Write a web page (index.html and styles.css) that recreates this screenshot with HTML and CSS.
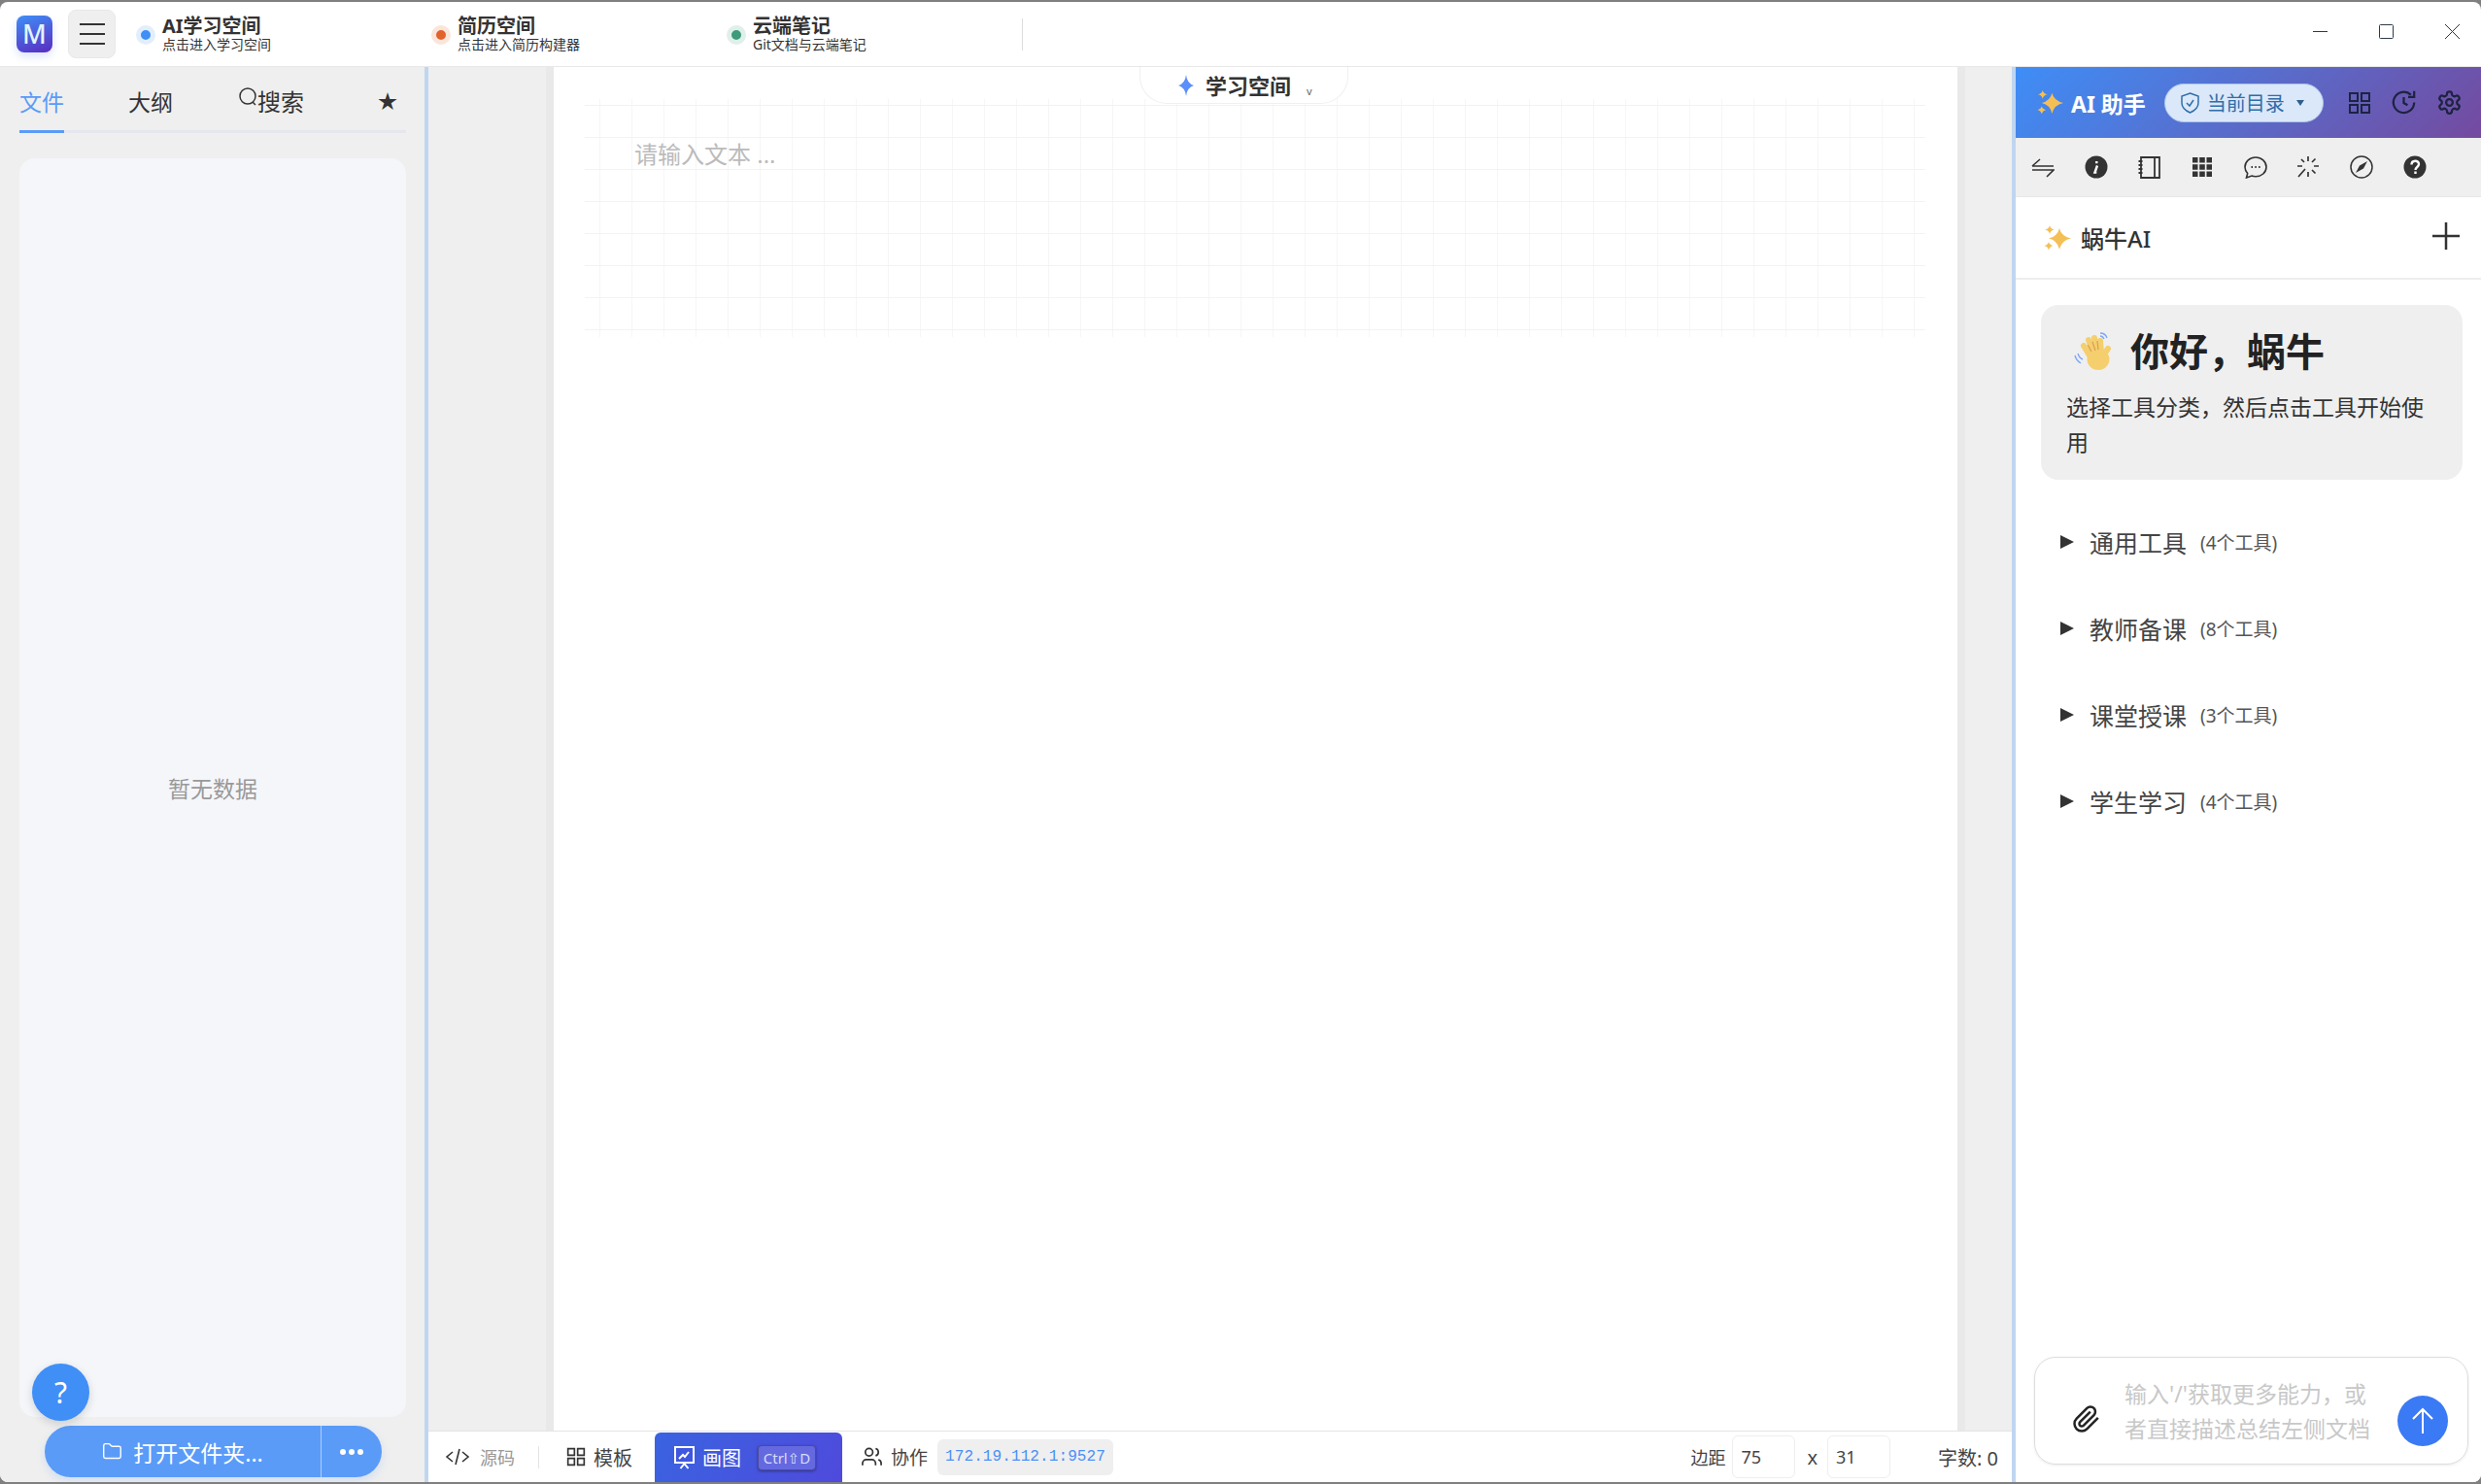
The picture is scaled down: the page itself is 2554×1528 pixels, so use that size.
FILE: index.html
```html
<!DOCTYPE html>
<html lang="zh-CN">
<head>
  <meta charset="UTF-8" />
  <title>蜗牛笔记</title>
  <link rel="stylesheet" href="styles.css">
</head>
<body>
  <svg class="defs" width="0" height="0">
    <symbol id="sparkle" viewBox="0 0 28 28">
      <path d="M16 4Q18 12.500 28 14.500Q18 16.500 16 26Q14 16.500 5 14.500Q14 12.500 16 4Z" fill="#f4bf55"/>
      <path d="M6 1Q6.800 4.700 11 5.500Q6.800 6.300 6 10Q5.200 6.300 1 5.500Q5.200 4.700 6 1Z" fill="#f4bf55"/>
      <path d="M5 18Q5.800 21.200 9.500 22Q5.800 22.800 5 26.500Q4.200 22.800 .5 22Q4.200 21.200 5 18Z" fill="#f4bf55"/>
    </symbol>
    <symbol id="grid4" viewBox="0 0 24 24">
      <path d="M2 2h8v8H2zM14 2h8v8h-8zM2 14h8v8H2zM14 14h8v8h-8z" fill="none" stroke="currentColor" stroke-width="2"/>
    </symbol>
  </svg>

  <div class="window">
    <!-- 顶部标题栏 -->
    <header class="titlebar">
      <div class="logo">M</div>
      <button class="menu-btn"><i></i><i></i><i></i></button>
      <div class="space-tabs">
        <div class="space-tab blue">
          <span class="dot"></span>
          <div><div class="space-name">AI学习空间</div><div class="space-sub">点击进入学习空间</div></div>
        </div>
        <div class="space-tab orange">
          <span class="dot"></span>
          <div><div class="space-name">简历空间</div><div class="space-sub">点击进入简历构建器</div></div>
        </div>
        <div class="space-tab green">
          <span class="dot"></span>
          <div><div class="space-name">云端笔记</div><div class="space-sub">Git文档与云端笔记</div></div>
        </div>
      </div>
      <div class="title-divider"></div>
      <div class="win-controls">
        <svg width="15" height="15" viewBox="0 0 15 15"><path d="M0 7.500h15" stroke="#2e3a4a" stroke-width="1"/></svg>
        <svg width="15" height="15" viewBox="0 0 15 15"><rect x=".5" y=".5" width="14" height="14" rx="1" fill="none" stroke="#2e3a4a"/></svg>
        <svg width="15" height="15" viewBox="0 0 15 15"><path d="M0 0l15 15M15 0L0 15" stroke="#2e3a4a" stroke-width="1"/></svg>
      </div>
    </header>

    <div class="main">
      <!-- 左侧文件栏 -->
      <aside class="left">
        <nav class="tabs">
          <span class="tab active">文件</span>
          <span class="tab outline">大纲</span>
          <span class="tab search">
            <svg width="20" height="22" viewBox="0 0 20 22"><circle cx="10" cy="10" r="8" fill="none" stroke="#333" stroke-width="1.500"/><path d="M15 16l3 3" stroke="#333" stroke-width="1.500"/></svg>搜索
          </span>
          <span class="tab star">★</span>
        </nav>
        <div class="file-panel">暂无数据</div>
        <div class="open-btn">
          <div class="open-main">
            <svg width="21" height="21" viewBox="0 0 24 24" fill="none" stroke="#fff" stroke-width="1.600"><path d="M20 20a2 2 0 0 0 2-2V8a2 2 0 0 0-2-2h-7.900a2 2 0 0 1-1.690-.9L9.600 3.900A2 2 0 0 0 7.930 3H4a2 2 0 0 0-2 2v13a2 2 0 0 0 2 2Z"/></svg>
            打开文件夹...
          </div>
          <div class="open-more"><i></i><i></i><i></i></div>
        </div>
        <div class="help-btn">?</div>
      </aside>

      <!-- 中间编辑区 -->
      <section class="center">
        <div class="editor-bg">
          <div class="page">
            <div class="page-tab">
              <svg width="18" height="24" viewBox="0 0 18 24"><path d="M9 1Q10 10 17 12Q10 14 9 23Q8 14 1 12Q8 10 9 1Z" fill="#5b8ff9"/></svg>
              <b>学习空间</b>
              <span class="caret">v</span>
            </div>
            <div class="canvas">请输入文本 ...</div>
          </div>
        </div>
        <footer class="statusbar">
          <span class="status-item source">
            <svg width="26" height="18" viewBox="0 0 26 18" fill="none" stroke="#333" stroke-width="1.600"><path d="M8 4L2 9l6 5M18 4l6 5-6 5M15 1l-4 16"/></svg>
            源码
          </span>
          <span class="status-sep"></span>
          <span class="status-item template">
            <svg width="20" height="20" color="#333"><use href="#grid4"/></svg>
            模板
          </span>
          <span class="draw-btn">
            <svg width="21" height="24" viewBox="0 0 21 24"><path d="M1 1h19v16H1z" fill="#3f56df" stroke="#fff" stroke-width="2"/><path d="M5 13l4-4 2 2 4-5" fill="none" stroke="#fff" stroke-width="2"/><path d="M10.500 18l-4 5M10.500 18l4 5" stroke="#fff" stroke-width="2"/></svg>
            画图
            <kbd>Ctrl⇧D</kbd>
          </span>
          <span class="status-item collab">
            <svg width="23" height="24" viewBox="0 0 24 24" fill="none" stroke="#333" stroke-width="1.800"><path d="M16 21v-2a4 4 0 0 0-4-4H6a4 4 0 0 0-4 4v2"/><circle cx="9" cy="7" r="4"/><path d="M22 21v-2a4 4 0 0 0-3-3.870"/><path d="M16 3.130a4 4 0 0 1 0 7.750"/></svg>
            协作
          </span>
          <code class="ip">172.19.112.1:9527</code>
          <div class="status-right">
            <span>边距</span>
            <span class="num-box">75</span>
            <span class="times">x</span>
            <span class="num-box">31</span>
            <span class="count">字数: 0</span>
          </div>
        </footer>
      </section>

      <!-- 右侧 AI 助手 -->
      <aside class="right">
        <div class="ai-head">
          <svg class="head-star" width="27" height="27"><use href="#sparkle"/></svg>
          <b class="ai-title">AI 助手</b>
          <div class="scope">
            <svg width="19" height="22" viewBox="0 0 19 22" fill="none" stroke="#2f6ea8" stroke-width="1.500"><path d="M9.500 1L18 4v7c0 5-4 8-8.500 10C5 19 1 16 1 11V4z"/><path d="M6 11l3 3 4-6"/></svg>
            当前目录
            <span class="scope-arrow"></span>
          </div>
          <div class="head-icons">
            <svg width="24" height="24"><use href="#grid4"/></svg>
            <svg width="27" height="27" viewBox="0 0 24 24" fill="none" stroke="currentColor" stroke-width="2"><path d="M21.500 12a9.500 9.500 0 1 1-3-7"/><path d="M21.500 1.500V7h-5.500"/><path d="M12 7v5.500l3.500 2"/></svg>
            <svg width="27" height="27" viewBox="0 0 24 24" fill="none" stroke="currentColor" stroke-width="2"><path d="M12.220 2h-.44a2 2 0 0 0-2 2v.18a2 2 0 0 1-1 1.730l-.43.25a2 2 0 0 1-2 0l-.15-.08a2 2 0 0 0-2.730.73l-.22.38a2 2 0 0 0 .73 2.730l.15.1a2 2 0 0 1 1 1.720v.51a2 2 0 0 1-1 1.740l-.15.09a2 2 0 0 0-.73 2.730l.22.38a2 2 0 0 0 2.730.73l.15-.08a2 2 0 0 1 2 0l.43.25a2 2 0 0 1 1 1.730V20a2 2 0 0 0 2 2h.44a2 2 0 0 0 2-2v-.18a2 2 0 0 1 1-1.730l.43-.25a2 2 0 0 1 2 0l.15.08a2 2 0 0 0 2.730-.73l.22-.39a2 2 0 0 0-.73-2.730l-.15-.08a2 2 0 0 1-1-1.740v-.5a2 2 0 0 1 1-1.740l.15-.09a2 2 0 0 0 .73-2.730l-.22-.38a2 2 0 0 0-2.730-.73l-.15.08a2 2 0 0 1-2 0l-.43-.25a2 2 0 0 1-1-1.730V4a2 2 0 0 0-2-2z"/><circle cx="12" cy="12" r="3"/></svg>
          </div>
        </div>

        <div class="ai-tools">
          <svg width="24" height="24" viewBox="0 0 24 24" fill="none" stroke="#333" stroke-width="1.600"><path d="M1 11h22M1 11l8-7M1 15h22l-7 7"/></svg>
          <svg width="24" height="24" viewBox="0 0 24 24"><circle cx="12" cy="12" r="11.500" fill="#333"/><path d="M13 10.500l-2.500 7h1.800M12.300 6v2.200" fill="none" stroke="#fff" stroke-width="2.400"/></svg>
          <svg width="24" height="24" viewBox="0 0 24 24" fill="none" stroke="#333" stroke-width="1.800"><path d="M4 2h19v21H4zM18 2v21M1.500 6h4M1.500 10h4M1.500 14h4M1.500 18h4"/></svg>
          <svg width="24" height="24" viewBox="0 0 24 22" fill="#333"><path d="M2 1h5.500v5.500H2zM9.200 1h5.600v5.500H9.200zM16.500 1H22v5.500h-5.500zM2 8.200h5.500v5.600H2zM9.200 8.200h5.600v5.600H9.200zM16.500 8.200H22v5.600h-5.500zM2 15.500h5.500V21H2zM9.200 15.500h5.600V21H9.200zM16.500 15.500H22V21h-5.500z"/></svg>
          <svg width="24" height="24" viewBox="0 0 24 24" fill="none" stroke="#333" stroke-width="1.600"><path d="M12 2c6 0 11 4.400 11 10s-5 9.800-11 9.800c-1.500 0-2.800-.2-4-.7L2.500 23l1.200-4.500C2 16.700 1 14.500 1 12 1 6.400 6 2 12 2z"/><path d="M7.500 12h1.500M11.300 12h1.500M15.100 12h1.500" stroke-width="2"/></svg>
          <svg width="24" height="24" viewBox="0 0 24 24" fill="none" stroke="#333" stroke-width="1.700"><path d="M12 1v5M12 17v5M23 11h-5M6 11H1M19.500 3.500L16 7M19.500 18.500L16 15M8 7L5 4M9 14l-7 8"/></svg>
          <svg width="24" height="24" viewBox="0 0 24 24"><circle cx="12" cy="12" r="11" fill="none" stroke="#333" stroke-width="1.500"/><path d="M18 6l-8 4.500-4 7.500 8-4.500z" fill="#333"/></svg>
          <svg width="24" height="24" viewBox="0 0 24 24"><circle cx="12" cy="12" r="11.500" fill="#333"/><path d="M8.500 9.500c0-5 7.500-5 7.500-.5 0 3-3.500 3-3.500 6M12.500 16.500v2.500" fill="none" stroke="#fff" stroke-width="2.400"/></svg>
        </div>

        <div class="chat-title">
          <svg width="28" height="28"><use href="#sparkle"/></svg>
          <b>蜗牛AI</b>
          <svg class="plus" width="28" height="28" viewBox="0 0 28 28"><path d="M14 0v28M0 14h28" stroke="#333" stroke-width="2.500"/></svg>
        </div>

        <div class="hello-card">
          <h1>
            <svg width="40" height="40" viewBox="0 0 40 40">
              <g stroke="#f5cf6e" stroke-width="6" stroke-linecap="round">
                <path d="M16 24L10 14M20 21L15 8M24 20L21 6M28 22L27 9M30 24l5-7"/>
              </g>
              <ellipse cx="25" cy="28" rx="11.500" ry="11" fill="#f5cf6e"/>
              <path d="M14 13l4 7M19 10l3 9M24 9l1 9" stroke="#d99e50" stroke-width="1.200" fill="none"/>
              <path d="M1 24c1 4 3 6 6 8M4 22c1 3 2 5 5 6M27 1c3 0 6 2 7 5M27 4c2 0 3 1 4 3" stroke="#7ea8f7" stroke-width="1.400" fill="none"/>
            </svg>
            你好，蜗牛
          </h1>
          <p>选择工具分类，然后点击工具开始使用</p>
        </div>

        <ul class="tool-groups">
          <li><span class="arrow"></span>通用工具<small>(4个工具)</small></li>
          <li><span class="arrow"></span>教师备课<small>(8个工具)</small></li>
          <li><span class="arrow"></span>课堂授课<small>(3个工具)</small></li>
          <li><span class="arrow"></span>学生学习<small>(4个工具)</small></li>
        </ul>

        <div class="ask-box">
          <svg class="clip" width="30" height="30" viewBox="0 0 24 24" fill="none" stroke="#222" stroke-width="2"><path d="m21.440 11.050-9.190 9.190a6 6 0 0 1-8.490-8.490l8.570-8.570A4 4 0 1 1 18 8.840l-8.590 8.570a2 2 0 0 1-2.830-2.830l8.490-8.480"/></svg>
          <div class="ask-text">输入'/'获取更多能力，或者直接描述总结左侧文档</div>
          <div class="send-btn">
            <svg width="24" height="28" viewBox="0 0 24 28" fill="none" stroke="#fff" stroke-width="2"><path d="M12 27V2M2 12L12 2l10 10"/></svg>
          </div>
        </div>
      </aside>
    </div>
  </div>
</body>
</html>
```

FILE: styles.css
```css
/* ======= 页面整体 ======= */
* {
  box-sizing: border-box;
  margin: 0;
  padding: 0;
}
body {
  font-family: "Noto Sans", "Noto Sans CJK SC", sans-serif;
  color: #333;
  background: #808080;
  overflow: hidden;
}
.defs {
  position: absolute;
}
.window {
  height: 1524px;
  margin-top: 2px;
  display: flex;
  flex-direction: column;
  background: #fff;
  border-radius: 8px;
  overflow: hidden;
}

/* ======= 标题栏 ======= */
.titlebar {
  height: 67px;
  padding-left: 17px;
  display: flex;
  align-items: center;
  border-bottom: 1px solid #e8e8e8;
}
.logo {
  width: 37px;
  height: 38px;
  border-radius: 8px;
  background: linear-gradient(160deg, #3f8ff7, #5a2bc0);
  color: #dff4ff;
  font-size: 27px;
  line-height: 38px;
  font-weight: 500;
  text-align: center;
  box-shadow: 0 4px 8px rgba(80, 120, 240, 0.2);
}
.menu-btn {
  width: 49px;
  height: 50px;
  margin-left: 16px;
  display: flex;
  flex-direction: column;
  justify-content: center;
  align-items: center;
  gap: 8px;
  background: #efefef;
  border: 1px solid #e8e8e8;
  border-radius: 8px;
}
.menu-btn i {
  display: block;
  width: 26px;
  height: 2px;
  background: #333;
}
.space-tabs {
  display: flex;
  margin-left: 21px;
}
.space-tab {
  width: 304px;
  display: flex;
  align-items: center;
  gap: 7px;
  padding-top: 2px;
}
.dot {
  width: 20px;
  height: 20px;
  border-radius: 50%;
  border: 5px solid;
}
.blue .dot { background: #3f8ff7; border-color: #e3eefc; }
.orange .dot { background: #e2622c; border-color: #fae5da; }
.green .dot { background: #3d9a7c; border-color: #e0efe9; }
.space-name {
  font-size: 20px;
  line-height: 20px;
  font-weight: 700;
}
.space-sub {
  font-size: 14px;
  line-height: 18px;
}
.title-divider {
  width: 1px;
  height: 33px;
  background: #ddd;
}
.win-controls {
  margin-left: auto;
  padding-right: 22px;
  display: flex;
  gap: 53px;
  position: relative;
  top: -3px;
}

/* ======= 主体三栏 ======= */
.main {
  flex: 1;
  display: flex;
  min-height: 0;
}

/* ======= 左栏 ======= */
.left {
  position: relative;
  width: 441px;
  padding: 0 19px 0 20px;
  display: flex;
  flex-direction: column;
  background: #efefef;
  border-right: 4px solid #bfd6f0;
}
.tabs {
  display: flex;
  border-bottom: 3px solid #e5e7ee;
}
.tab {
  padding: 20px 0 13px;
  font-size: 23px;
  line-height: 32px;
  color: #333;
}
.tab.active {
  color: #5a9bf8;
  border-bottom: 3px solid #5a9bf8;
  margin-bottom: -3px;
}
.tab.outline { margin-left: 66px; }
.tab.search {
  margin-left: 67px;
  display: flex;
  align-items: flex-start;
  font-size: 24px;
}
.tab.star {
  margin-left: auto;
  margin-right: 9px;
  font-size: 20px;
}
.file-panel {
  flex: 1;
  margin-top: 26px;
  display: flex;
  align-items: center;
  justify-content: center;
  background: #f5f6fa;
  border-radius: 16px;
  font-size: 23px;
  color: #999;
}
.open-btn {
  height: 53px;
  margin: 9px 25px 5px 26px;
  display: flex;
  background: #5a9bf8;
  border-radius: 27px;
  color: #fff;
  font-size: 23px;
  box-shadow: 0 4px 10px rgba(90, 155, 248, 0.2);
}
.open-main {
  flex: 1;
  display: flex;
  align-items: center;
  justify-content: center;
  gap: 11px;
}
.open-more {
  width: 63px;
  display: flex;
  align-items: center;
  justify-content: center;
  gap: 3px;
  border-left: 1px solid rgba(255, 255, 255, 0.5);
}
.open-more i {
  width: 6px;
  height: 6px;
  border-radius: 50%;
  background: #fff;
}
.help-btn {
  position: absolute;
  left: 33px;
  bottom: 63px;
  width: 59px;
  height: 59px;
  border-radius: 50%;
  background: #3f8ff7;
  color: #fff;
  font-size: 30px;
  line-height: 59px;
  text-align: center;
  box-shadow: 0 3px 10px rgba(0, 0, 0, 0.15);
}

/* ======= 中间编辑区 ======= */
.center {
  flex: 1;
  min-width: 0;
  display: flex;
  flex-direction: column;
}
.editor-bg {
  flex: 1;
  min-height: 0;
  padding-left: 129px;
  background: #efefef;
  overflow: hidden;
}
.page {
  position: relative;
  width: 1445px;
  height: 100%;
  padding: 33px 33px 0 32px;
  background: #fff;
  box-shadow: 0 0 0 8px #e9e9e9;
}
.page-tab {
  position: absolute;
  top: 0;
  left: 603px;
  width: 215px;
  height: 38px;
  padding-left: 38px;
  display: flex;
  align-items: center;
  gap: 11px;
  background: #fff;
  border: 1px solid #f0f0f0;
  border-top: none;
  border-radius: 0 0 28px 28px;
  font-size: 22px;
}
.page-tab b {
  line-height: 26px;
}
.caret {
  font-size: 11px;
  margin: 12px 0 0 5px;
  color: #666;
}
.canvas {
  height: 245px;
  width: 1380px;
  padding: 39px 0 0 51px;
  background-image:
    linear-gradient(#f3f3f3 1px, transparent 1px),
    linear-gradient(90deg, #f6f6f6 1px, transparent 1px);
  background-size: 33px 33px;
  background-position: 15px 6px;
  font-size: 24px;
  line-height: 36px;
  color: #bbb;
}
.statusbar {
  height: 53px;
  padding-left: 17px;
  display: flex;
  align-items: center;
  background: #fff;
  border-top: 1px solid #e4e4e4;
  font-size: 20px;
}
.status-item {
  display: flex;
  align-items: center;
}
.source {
  gap: 10px;
  font-size: 18px;
  color: #999;
}
.status-sep {
  width: 1px;
  height: 23px;
  margin-left: 24px;
  background: #e4e4e4;
}
.template {
  margin-left: 28px;
  gap: 8px;
  color: #444;
}
.draw-btn {
  width: 193px;
  height: 51px;
  margin-left: 23px;
  padding-left: 20px;
  align-self: flex-end;
  display: flex;
  align-items: center;
  gap: 8px;
  background: linear-gradient(120deg, #3a63e0, #4f4adc);
  border-radius: 6px 6px 0 0;
  color: #fff;
}
.draw-btn kbd {
  width: 60px;
  height: 26px;
  margin-left: 9px;
  background: #6569e0;
  border: 1px solid #4a4a9a;
  border-radius: 4px;
  font-family: "Noto Sans", "DejaVu Sans", sans-serif;
  font-size: 15px;
  line-height: 24px;
  text-align: center;
  color: #d5ddfa;
  box-shadow: 0 1px 3px rgba(0, 0, 0, 0.35);
}
.collab {
  margin-left: 19px;
  gap: 8px;
  font-size: 19px;
  color: #444;
}
.ip {
  margin-left: 10px;
  height: 37px;
  width: 181px;
  border-radius: 6px;
  background: #efefef;
  color: #4a90f7;
  font-family: "Liberation Mono", monospace;
  font-size: 16px;
  letter-spacing: 0.1px;
  line-height: 37px;
  text-align: center;
}
.status-right {
  margin-left: auto;
  padding-right: 14px;
  display: flex;
  align-items: center;
  font-size: 18px;
  color: #444;
}
.num-box {
  width: 65px;
  height: 44px;
  margin-left: 7px;
  padding-left: 8px;
  border: 1px solid #eee;
  border-radius: 6px;
  line-height: 42px;
}
.times {
  margin: 0 10px 0 12px;
  font-size: 20px;
}
.num-box + .times + .num-box {
  margin-left: 0;
}
.count {
  margin-left: 49px;
  font-size: 20px;
}

/* ======= 右栏 AI 助手 ======= */
.right {
  width: 483px;
  display: flex;
  flex-direction: column;
  background: #fff;
  border-left: 4px solid #bfd6f0;
}
.ai-head {
  height: 73px;
  padding: 0 19px 0 22px;
  display: flex;
  align-items: center;
  background: linear-gradient(135deg, #3e8ef7, #744a9f);
  color: #fff;
}
.ai-title {
  margin-left: 8px;
  font-size: 23px;
  white-space: nowrap;
}
.scope {
  width: 164px;
  height: 40px;
  margin-left: 19px;
  padding-left: 16px;
  display: flex;
  align-items: center;
  gap: 8px;
  background: #dbe8f9;
  border: 1px solid #a9c5ea;
  border-radius: 20px;
  font-size: 20px;
  color: #2f6ea8;
}
.scope-arrow {
  margin-left: 4px;
  border: 4px solid transparent;
  border-top: 6px solid #2f5f8f;
  border-bottom: none;
}
.head-icons {
  margin-left: auto;
  display: flex;
  align-items: center;
  gap: 20px;
  color: #1d2340;
}
.ai-tools {
  height: 61px;
  padding-left: 16px;
  display: flex;
  align-items: center;
  gap: 30.700px;
  background: #efefef;
  border-bottom: 1px solid #e6e6e6;
}
.chat-title {
  height: 85px;
  padding: 0 22px 0 29px;
  display: flex;
  align-items: center;
  gap: 10px;
  border-bottom: 2px solid #eee;
  font-size: 24px;
}
.chat-title b {
  font-weight: 500;
}
.plus {
  margin-left: auto;
  margin-top: -4px;
}
.hello-card {
  margin: 26px 19px 0 26px;
  height: 180px;
  padding: 26px 22px 0 26px;
  background: #efefef;
  border-radius: 18px;
}
.hello-card h1 {
  display: flex;
  align-items: center;
  gap: 18px;
  font-size: 40px;
  line-height: 44px;
  color: #222;
}
.hello-card h1 svg {
  margin-left: 8px;
}
.hello-card p {
  margin-top: 17px;
  font-size: 23px;
  line-height: 36px;
  color: #333;
}
.tool-groups {
  margin-top: 19px;
  list-style: none;
}
.tool-groups li {
  height: 89px;
  padding-left: 46px;
  display: flex;
  align-items: center;
  font-size: 25px;
  color: #444;
}
.arrow {
  margin-right: 16px;
  border: 7px solid transparent;
  border-left: 14px solid #333;
  border-right: none;
}
.tool-groups small {
  margin-left: 14px;
  font-size: 19px;
  color: #555;
}
.ask-box {
  height: 111px;
  margin: auto 13px 18px 19px;
  padding: 0 20px 0 38px;
  display: flex;
  align-items: center;
  border: 1px solid #ddd;
  border-radius: 22px;
  box-shadow: 0 1px 3px rgba(0, 0, 0, 0.08);
}
.clip {
  margin-top: 16px;
  flex: none;
}
.ask-text {
  width: 270px;
  margin-left: 24px;
  font-size: 23px;
  line-height: 36px;
  color: #c8c8c8;
}
.send-btn {
  width: 52px;
  height: 52px;
  margin: 21px 0 0 auto;
  display: flex;
  align-items: center;
  justify-content: center;
  border-radius: 50%;
  background: #3b7af5;
}
```
